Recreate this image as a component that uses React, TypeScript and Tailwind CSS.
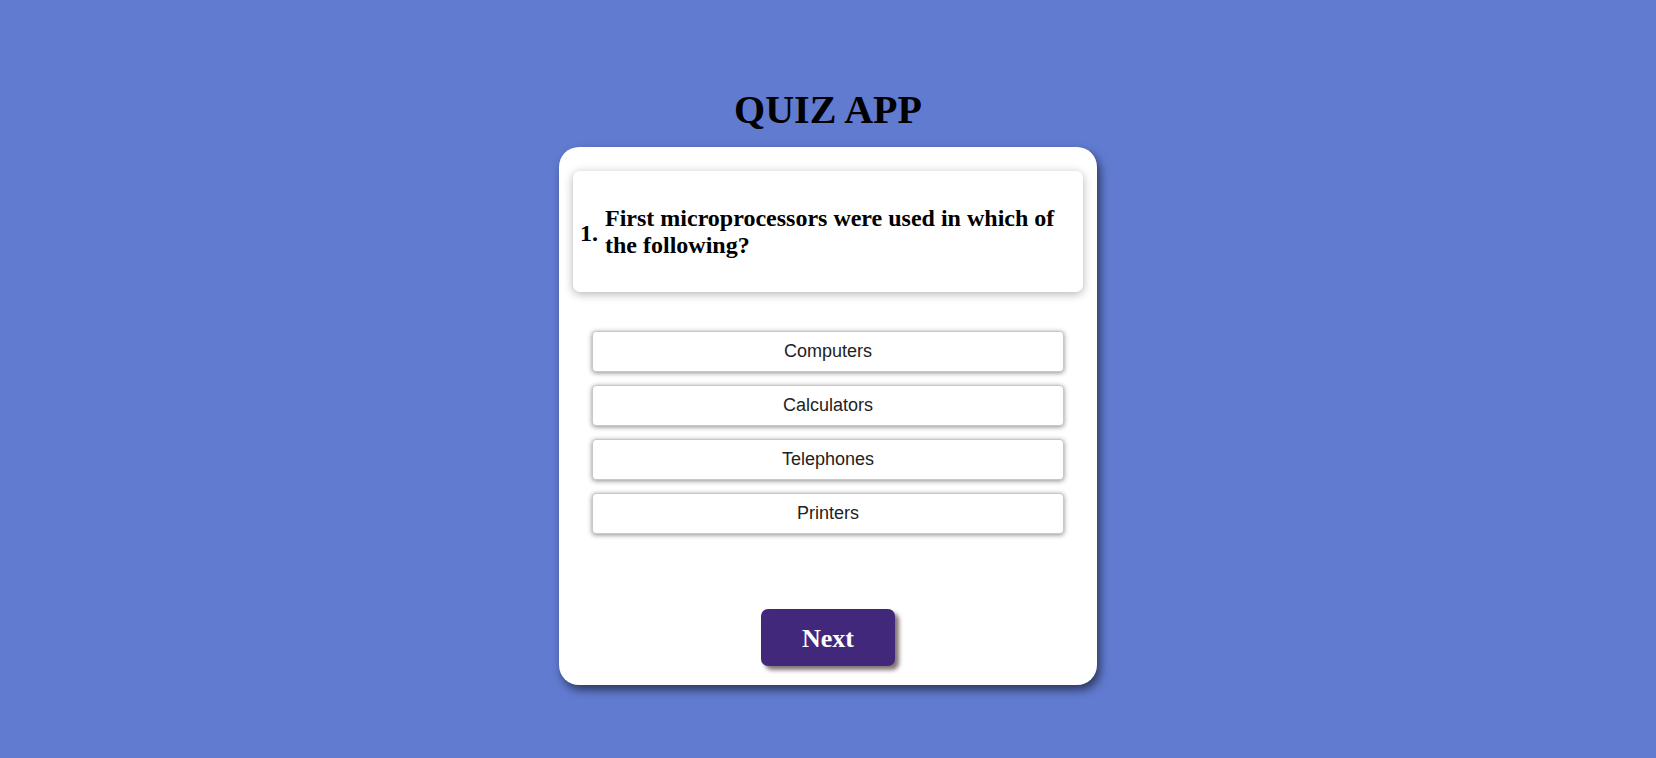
const options = ["Computers", "Calculators", "Telephones", "Printers"];

export default function App() {
  return (
    <div className="min-h-screen w-full bg-[#617bd1] flex flex-col items-center pt-[87px] pb-10">
      <h1 className="text-[40px] leading-[46px] font-bold text-black font-['Liberation_Serif',serif]">
        QUIZ APP
      </h1>

      <div className="mt-[14px] w-[538px] h-[538px] bg-white rounded-[20px] shadow-[3px_5px_10px_rgba(0,0,0,0.55)] pt-[24px] px-[14px] flex flex-col items-center">
        <div className="w-full h-[121px] bg-white rounded-[7px] shadow-[0_2px_10px_rgba(0,0,0,0.3)] flex items-center gap-[7px] pl-[7px] pr-[12px] font-['Liberation_Serif',serif] font-bold text-[24px] leading-[27px] text-black">
          <span className="shrink-0 mt-[4px]">1.</span>
          <span>First microprocessors were used in which of the following?</span>
        </div>

        <div className="mt-[39px] w-[472px] flex flex-col gap-[13px]">
          {options.map((opt) => (
            <button
              key={opt}
              className="h-[41px] w-full bg-white rounded-[4px] border border-[#c8c8c8] shadow-[0_1px_5px_rgba(0,0,0,0.45)] text-[18px] text-[#222] font-['Liberation_Sans',Arial,sans-serif]"
            >
              {opt}
            </button>
          ))}
        </div>

        <button className="mt-[75px] w-[134px] h-[57px] bg-[#42287a] rounded-[7px] shadow-[4px_4px_4px_rgba(90,70,70,0.75)] text-white text-[26px] font-bold font-['Liberation_Serif',serif] pt-[2px]">
          Next
        </button>
      </div>
    </div>
  );
}
